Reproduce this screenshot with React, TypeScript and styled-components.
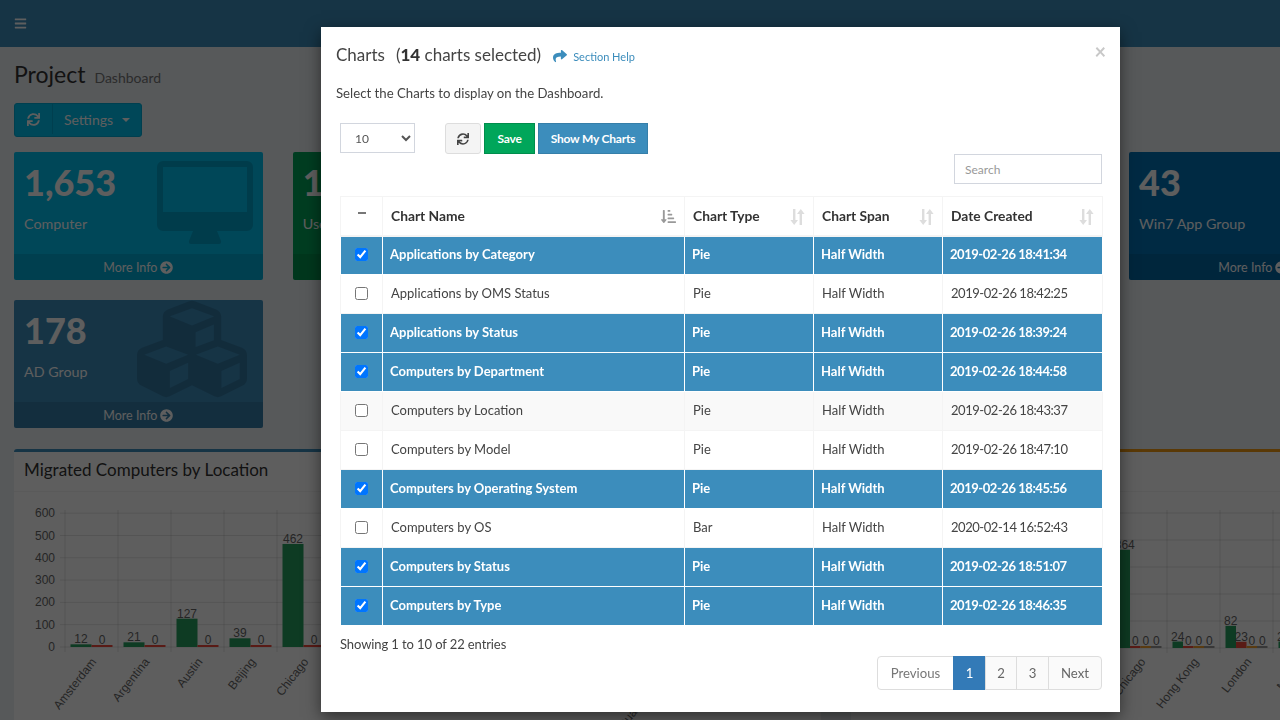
import React from "react";
import styled, { createGlobalStyle } from "styled-components";
import {
  FaArrowCircleRight,
  FaBars,
  FaCubes,
  FaShare,
  FaSortAmountDownAlt,
  FaSync,
} from "react-icons/fa";

const GlobalStyle = createGlobalStyle`
  html, body {
    margin: 0;
    height: 720px;
    overflow: hidden;
    background: #ecf0f5;
    font-family: Lato, "Noto Sans", sans-serif;
    font-size: 13px;
    color: #333;
  }
  * { box-sizing: border-box; }
`;

const Page = styled.div`
  width: 1280px;
  height: 720px;
  overflow: hidden;
`;

const TopBar = styled.header`
  height: 47px;
  background: #3c8dbc;
  color: #fff;
  display: flex;
  align-items: center;
  padding-left: 14px;
  font-size: 13px;
`;

const Content = styled.main`
  width: 1700px;
  padding: 12px 14px;
`;

const Heading = styled.div`
  display: flex;
  align-items: baseline;
  gap: 9px;
  height: 30px;
  font-size: 23px;
  line-height: 30px;
  color: #333;
`;

const SubHeading = styled.small`
  font-size: 14px;
  color: #777;
`;

const SettingsGroup = styled.div`
  display: inline-flex;
  height: 34px;
  margin-top: 14px;
  padding-bottom: 2px;
  background: #00c0ef;
  border: 1px solid #00acd6;
  border-radius: 3px;
  color: #fff;
  font-size: 14px;
`;

const SettingsPart = styled.div<{ $width: number; $divider?: boolean }>`
  width: ${(p) => p.$width}px;
  display: flex;
  align-items: center;
  justify-content: center;
  gap: 9px;
  border-left: ${(p) => (p.$divider ? "1px solid #00acd6" : "0")};
`;

const Caret = styled.span`
  border-top: 4px solid #fff;
  border-left: 4px solid transparent;
  border-right: 4px solid transparent;
  margin-top: 2px;
`;

const CardGrid = styled.div`
  display: grid;
  grid-template-columns: repeat(5, 248.75px);
  grid-auto-rows: 128px;
  gap: 20px 30px;
  margin-top: 15px;
`;

const Card = styled.div<{ $bg: string }>`
  position: relative;
  height: 128px;
  background: ${(p) => p.$bg};
  border-radius: 2px;
  color: #fff;
  overflow: hidden;
  display: flex;
  flex-direction: column;
`;

const CardBody = styled.div`
  flex: 1;
  padding: 8px 10px;
`;

const CardNumber = styled.div`
  font-size: 36px;
  font-weight: 900;
  line-height: 44px;
`;

const CardLabel = styled.div`
  margin-top: 10px;
  font-size: 14.3px;
  line-height: 20px;
`;

const CardIcon = styled.div<{ $right: number; $top: number; $size: number }>`
  position: absolute;
  right: ${(p) => p.$right}px;
  top: ${(p) => p.$top}px;
  font-size: ${(p) => p.$size}px;
  line-height: 0;
  color: rgba(0, 0, 0, 0.15);
`;

const CardFooter = styled.div`
  height: 26px;
  display: flex;
  align-items: center;
  justify-content: center;
  gap: 3px;
  font-size: 12.5px;
  background: rgba(0, 0, 0, 0.1);
`;

const ChartRow = styled.div`
  display: grid;
  grid-template-columns: 807px 807px;
  gap: 30px;
  margin-top: 21px;
`;

const ChartPanel = styled.section<{ $accent: string }>`
  height: 300px;
  background: #fff;
  border-top: 3px solid ${(p) => p.$accent};
  border-radius: 3px;
`;

const ChartTitle = styled.div`
  height: 40px;
  padding: 6px 10px;
  font-size: 17px;
  line-height: 24px;
  border-bottom: 1px solid #f4f4f4;
`;

const Backdrop = styled.div`
  position: fixed;
  inset: 0;
  background: rgba(0, 0, 0, 0.63);
`;

const Modal = styled.div`
  position: absolute;
  left: 321px;
  top: 27px;
  width: 799px;
  height: 685px;
  padding: 14px 18px 0 15px;
  background: #fff;
  box-shadow: 0 5px 15px rgba(0, 0, 0, 0.5);
`;

const CloseMark = styled.span`
  position: absolute;
  right: 14px;
  top: 13px;
  font-size: 20px;
  line-height: 22px;
  font-weight: 700;
  color: #c8c8c8;
`;

const ModalTitle = styled.div`
  display: flex;
  align-items: center;
  height: 26px;
  font-size: 17px;
  color: #444;
`;

const SelectedCount = styled.span`
  margin-left: 11px;
  b {
    color: #333;
    font-weight: 900;
  }
`;

const HelpLink = styled.a`
  display: inline-flex;
  align-items: center;
  gap: 6px;
  margin-left: 12px;
  margin-top: 4px;
  font-size: 11px;
  color: #3c8dbc;
  svg {
    font-size: 14px;
  }
`;

const Intro = styled.p`
  margin: 16px 0 0;
  font-size: 13.2px;
  line-height: 20px;
  color: #444;
`;

const ModalInner = styled.div`
  margin: 20px 0 0 4px;
`;

const Toolbar = styled.div`
  display: flex;
  align-items: flex-start;
  height: 31px;
`;

const LengthSelect = styled.select`
  width: 75px;
  height: 30px;
  margin-right: 30px;
  padding-left: 10px;
  background: #fff;
  border: 1px solid #d2d6de;
  border-radius: 0;
  font-family: inherit;
  font-size: 12px;
  color: #555;
  outline: none;
`;

const ToolButton = styled.button<{ $bg: string; $edge: string; $width: number; $color?: string }>`
  width: ${(p) => p.$width}px;
  height: 31px;
  margin-right: 3px;
  padding: 0;
  display: flex;
  align-items: center;
  justify-content: center;
  background: ${(p) => p.$bg};
  border: 1px solid ${(p) => p.$edge};
  border-radius: ${(p) => (p.$color ? "3px" : "0")};
  color: ${(p) => p.$color || "#fff"};
  font-family: inherit;
  font-size: 12px;
  font-weight: 700;
  letter-spacing: -0.2px;
`;

const SearchRow = styled.div`
  display: flex;
  justify-content: flex-end;
`;

const SearchInput = styled.input`
  width: 148px;
  height: 30px;
  padding: 0 10px;
  border: 1px solid #d2d6de;
  font-family: inherit;
  font-size: 12px;
  outline: none;
  &::placeholder {
    color: #999;
    opacity: 1;
  }
`;

const Table = styled.table`
  width: 762px;
  margin-top: 12px;
  table-layout: fixed;
  border-collapse: collapse;
`;

const HeadCell = styled.th`
  position: relative;
  height: 39px;
  padding: 0 8px;
  text-align: left;
  font-size: 13.8px;
  font-weight: 700;
  color: #333;
  border: 1px solid #f4f4f4;
  border-bottom-width: 2px;
`;

const SortMark = styled.span<{ $active?: boolean }>`
  position: absolute;
  right: 8px;
  top: 12px;
  line-height: 0;
  font-size: 15px;
  color: ${(p) => (p.$active ? "#999" : "#ddd")};
`;

const MinusMark = styled.span`
  display: block;
  width: 8px;
  height: 2px;
  margin: -4px auto 0;
  background: #777;
`;

const Row = styled.tr<{ $selected: boolean; $striped: boolean }>`
  height: 39px;
  background: ${(p) => (p.$selected ? "#3c8dbc" : p.$striped ? "#f9f9f9" : "#fff")};
  color: ${(p) => (p.$selected ? "#fff" : "#444")};
  font-weight: ${(p) => (p.$selected ? 700 : 400)};
`;

const Cell = styled.td<{ $selected: boolean; $center?: boolean; $date?: boolean }>`
  padding: 0 ${(p) => (p.$selected ? "7px" : "8px")} 3px;
  font-size: 13px;
  white-space: nowrap;
  letter-spacing: ${(p) => (p.$date ? "-0.45px" : "0")};
  text-align: ${(p) => (p.$center ? "center" : "left")};
  border: 1px solid ${(p) => (p.$selected ? "#fff" : "#f4f4f4")};
`;

const RowCheck = styled.input`
  display: block;
  width: 13px;
  height: 13px;
  margin: 2px auto 0;
`;

const Entries = styled.div`
  margin-top: 8px;
  font-size: 13px;
  letter-spacing: -0.1px;
  line-height: 20px;
  color: #444;
`;

const Pager = styled.div`
  display: flex;
  justify-content: flex-end;
  margin-top: 2px;
`;

const PageLink = styled.span<{ $width: number; $state?: "active" | "muted" }>`
  width: ${(p) => p.$width}px;
  height: 34px;
  display: flex;
  align-items: center;
  justify-content: center;
  margin-left: -1px;
  font-size: 13.2px;
  border: 1px solid ${(p) => (p.$state === "active" ? "#337ab7" : "#ddd")};
  background: ${(p) =>
    p.$state === "active" ? "#337ab7" : p.$state === "muted" ? "#fff" : "#fafafa"};
  color: ${(p) => (p.$state === "active" ? "#fff" : p.$state === "muted" ? "#777" : "#666")};
  &:first-child {
    border-radius: 4px 0 0 4px;
  }
  &:last-child {
    border-radius: 0 4px 4px 0;
  }
`;

const ChartSvg = styled.svg`
  display: block;
  font-family: "Liberation Sans", Arial, sans-serif;
  font-size: 12px;
  text {
    fill: #666;
  }
`;

type ChartRowData = {
  name: string;
  type: string;
  date: string;
  selected: boolean;
};

const rows: ChartRowData[] = [
  { name: "Applications by Category", type: "Pie", date: "2019-02-26 18:41:34", selected: true },
  { name: "Applications by OMS Status", type: "Pie", date: "2019-02-26 18:42:25", selected: false },
  { name: "Applications by Status", type: "Pie", date: "2019-02-26 18:39:24", selected: true },
  { name: "Computers by Department", type: "Pie", date: "2019-02-26 18:44:58", selected: true },
  { name: "Computers by Location", type: "Pie", date: "2019-02-26 18:43:37", selected: false },
  { name: "Computers by Model", type: "Pie", date: "2019-02-26 18:47:10", selected: false },
  { name: "Computers by Operating System", type: "Pie", date: "2019-02-26 18:45:56", selected: true },
  { name: "Computers by OS", type: "Bar", date: "2020-02-14 16:52:43", selected: false },
  { name: "Computers by Status", type: "Pie", date: "2019-02-26 18:51:07", selected: true },
  { name: "Computers by Type", type: "Pie", date: "2019-02-26 18:46:35", selected: true },
];

const SortArrows = () => (
  <svg width="15" height="16" viewBox="0 0 15 16" fill="currentColor">
    <path d="M3 0h2.4v11H8L4.2 16 .4 11H3z" />
    <path d="M9.6 16h2.4V5h2.6L10.8 0 7 5h2.6z" />
  </svg>
);

const MonitorIcon = () => (
  <svg width="96" height="83" viewBox="0 0 96 83" fill="currentColor">
    <path
      fillRule="evenodd"
      d="M6 0h84a6 6 0 0 1 6 6v58a6 6 0 0 1-6 6H6a6 6 0 0 1-6-6V6a6 6 0 0 1 6-6zm0 6v45h84V6z"
    />
    <path d="M36 70h24l4 10q.5 3-2 3H34q-2.5 0-2-3z" />
  </svg>
);

const columns = ["Chart Name", "Chart Type", "Chart Span", "Date Created"];

type Group = { name: string; bars: number[] };

const leftGroups: Group[] = [
  { name: "Amsterdam", bars: [12, 0] },
  { name: "Argentina", bars: [21, 0] },
  { name: "Austin", bars: [127, 0] },
  { name: "Beijing", bars: [39, 0] },
  { name: "Chicago", bars: [462, 0] },
];

const rightGroups: Group[] = [
  { name: "Chicago", bars: [364, 0, 0, 0] },
  { name: "Hong Kong", bars: [24, 0, 0, 0] },
  { name: "London", bars: [82, 23, 0, 0] },
  { name: "Madrid", bars: [24, 0, 0, 0] },
];

const barColors = ["#28a060", "#f04a3c", "#f0a030", "#999"];

const BarChart: React.FC<{
  originX: number;
  firstGrid: number;
  groups: Group[];
  barWidth: number;
  baseline: number;
  unit: number;
  gridCount: number;
  showScale?: boolean;
  extraLabel?: { text: string; x: number };
}> = ({ originX, firstGrid, groups, barWidth, baseline, unit, gridCount, showScale, extraLabel }) => {
  const step = 53;
  return (
    <ChartSvg width="807" height="228" viewBox={`${originX} 492 807 228`}>
      {[0, 100, 200, 300, 400, 500, 600].map((v) => {
        const y = baseline - (v * unit) / 100;
        return (
          <g key={v}>
            <line x1={firstGrid - 5} x2={originX + 807} y1={y} y2={y} stroke="rgba(0,0,0,0.1)" />
            {showScale && (
              <text x={55} y={y + 4} textAnchor="end">
                {v}
              </text>
            )}
          </g>
        );
      })}
      {Array.from({ length: gridCount }).map((_, i) => (
        <line
          key={i}
          x1={firstGrid + i * step}
          x2={firstGrid + i * step}
          y1={510}
          y2={baseline + 5}
          stroke="rgba(0,0,0,0.1)"
        />
      ))}
      {groups.map((g, i) => {
        const gx = firstGrid + i * step;
        const inner = (step - barWidth * g.bars.length) / 2;
        return (
          <g key={g.name}>
            {g.bars.map((v, j) => {
              const h = Math.max((v * unit) / 100, 2);
              const x = gx + inner + j * barWidth;
              return (
                <g key={j}>
                  <rect x={x} y={baseline - h} width={barWidth} height={h} fill={barColors[j]} />
                  <text x={x + barWidth / 2} y={baseline - h - 1} textAnchor="middle">
                    {v}
                  </text>
                </g>
              );
            })}
            <text textAnchor="end" transform={`translate(${gx + 32} 662) rotate(-52)`}>
              {g.name}
            </text>
          </g>
        );
      })}
      {extraLabel && (
        <text textAnchor="end" transform={`translate(${extraLabel.x} 662) rotate(-52)`}>
          {extraLabel.text}
        </text>
      )}
    </ChartSvg>
  );
};

const App: React.FC = () => {
  return (
    <>
      <GlobalStyle />
      <Page>
        <TopBar>
          <FaBars />
        </TopBar>
        <Content>
          <Heading>
            Project
            <SubHeading>Dashboard</SubHeading>
          </Heading>
          <SettingsGroup>
            <SettingsPart $width={37}>
              <FaSync size={13} />
            </SettingsPart>
            <SettingsPart $width={89} $divider>
              Settings
              <Caret />
            </SettingsPart>
          </SettingsGroup>
          <CardGrid>
            <Card $bg="#00c0ef">
              <CardBody>
                <CardNumber>1,653</CardNumber>
                <CardLabel>Computer</CardLabel>
              </CardBody>
              <CardIcon $right={10} $top={9} $size={96}>
                <MonitorIcon />
              </CardIcon>
              <CardFooter>
                More Info <FaArrowCircleRight size={13} />
              </CardFooter>
            </Card>
            <Card $bg="#00a65a">
              <CardBody>
                <CardNumber>1,204</CardNumber>
                <CardLabel>User</CardLabel>
              </CardBody>
              <CardFooter>
                More Info <FaArrowCircleRight size={13} />
              </CardFooter>
            </Card>
            <Card $bg="#f39c12" />
            <Card $bg="#dd4b39" />
            <Card $bg="#0073b7">
              <CardBody>
                <CardNumber>43</CardNumber>
                <CardLabel>Win7 App Group</CardLabel>
              </CardBody>
              <CardFooter>
                More Info <FaArrowCircleRight size={13} />
              </CardFooter>
            </Card>
            <Card $bg="#3c8dbc">
              <CardBody>
                <CardNumber>178</CardNumber>
                <CardLabel>AD Group</CardLabel>
              </CardBody>
              <CardIcon $right={16} $top={-6} $size={110}>
                <FaCubes />
              </CardIcon>
              <CardFooter>
                More Info <FaArrowCircleRight size={13} />
              </CardFooter>
            </Card>
          </CardGrid>
          <ChartRow>
            <ChartPanel $accent="#3c8dbc">
              <ChartTitle>Migrated Computers by Location</ChartTitle>
              <BarChart
                originX={14}
                firstGrid={65}
                groups={leftGroups}
                barWidth={21}
                baseline={647}
                unit={22.3}
                gridCount={15}
                showScale
                extraLabel={{ text: "Guadalajara HQ", x: 677 }}
              />
            </ChartPanel>
            <ChartPanel $accent="#f39c12">
              <ChartTitle />
              <BarChart
                originX={851}
                firstGrid={1114}
                groups={rightGroups}
                barWidth={10.5}
                baseline={648}
                unit={27}
                gridCount={4}
              />
            </ChartPanel>
          </ChartRow>
        </Content>
      </Page>
      <Backdrop />
      <Modal>
        <CloseMark>×</CloseMark>
        <ModalTitle>
          Charts
          <SelectedCount>
            (<b>14</b> charts selected)
          </SelectedCount>
          <HelpLink>
            <FaShare />
            Section Help
          </HelpLink>
        </ModalTitle>
        <Intro>Select the Charts to display on the Dashboard.</Intro>
        <ModalInner>
          <Toolbar>
            <LengthSelect defaultValue="10">
              <option>10</option>
              <option>25</option>
              <option>50</option>
            </LengthSelect>
            <ToolButton $bg="#f4f4f4" $edge="#ddd" $width={36} $color="#444">
              <FaSync size={12} />
            </ToolButton>
            <ToolButton $bg="#00a65a" $edge="#008d4c" $width={51}>
              Save
            </ToolButton>
            <ToolButton $bg="#3c8dbc" $edge="#367fa9" $width={110}>
              Show My Charts
            </ToolButton>
          </Toolbar>
          <SearchRow>
            <SearchInput placeholder="Search" />
          </SearchRow>
          <Table>
            <colgroup>
              <col style={{ width: 42 }} />
              <col style={{ width: 302 }} />
              <col style={{ width: 129 }} />
              <col style={{ width: 129 }} />
              <col style={{ width: 160 }} />
            </colgroup>
            <thead>
              <tr>
                <HeadCell>
                  <MinusMark />
                </HeadCell>
                {columns.map((c, i) => (
                  <HeadCell key={c}>
                    {c}
                    <SortMark $active={i === 0}>
                      {i === 0 ? <FaSortAmountDownAlt /> : <SortArrows />}
                    </SortMark>
                  </HeadCell>
                ))}
              </tr>
            </thead>
            <tbody>
              {rows.map((r, i) => (
                <Row key={r.name} $selected={r.selected} $striped={i % 2 === 0}>
                  <Cell $selected={r.selected} $center>
                    <RowCheck type="checkbox" defaultChecked={r.selected} />
                  </Cell>
                  <Cell $selected={r.selected}>{r.name}</Cell>
                  <Cell $selected={r.selected}>{r.type}</Cell>
                  <Cell $selected={r.selected}>Half Width</Cell>
                  <Cell $selected={r.selected} $date>
                    {r.date}
                  </Cell>
                </Row>
              ))}
            </tbody>
          </Table>
          <Entries>Showing 1 to 10 of 22 entries</Entries>
          <Pager>
            <PageLink $width={77} $state="muted">
              Previous
            </PageLink>
            <PageLink $width={33} $state="active">
              1
            </PageLink>
            <PageLink $width={32}>2</PageLink>
            <PageLink $width={33}>3</PageLink>
            <PageLink $width={54}>Next</PageLink>
          </Pager>
        </ModalInner>
      </Modal>
    </>
  );
};

export default App;
